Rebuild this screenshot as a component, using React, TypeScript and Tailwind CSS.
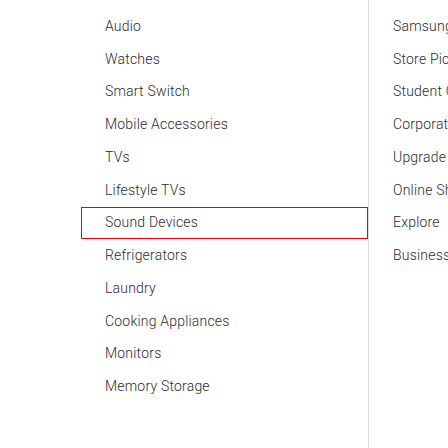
const left = [
  "Audio",
  "Watches",
  "Smart Switch",
  "Mobile Accessories",
  "TVs",
  "Lifestyle TVs",
  "Sound Devices",
  "Refrigerators",
  "Laundry",
  "Cooking Appliances",
  "Monitors",
  "Memory Storage",
];

const right = [
  "Samsung Members",
  "Store Pickup",
  "Student Offers",
  "Corporate Offers",
  "Upgrade Program",
  "Online Shop",
  "Explore",
  "Business",
];

const ACTIVE = "Sound Devices";

export default function App() {
  return (
    <div
      className="flex h-[448px] w-[448px] overflow-hidden bg-white text-[14px] font-light tracking-[0.2px] text-[#2a2a2a]"
      style={{ fontFamily: "Roboto, 'Liberation Sans', sans-serif" }}
    >
      <ul className="w-[368px] shrink-0 pt-[10px] pl-[81px]">
        {left.map((item) => (
          <li
            key={item}
            className={
              "flex h-[32.75px] items-center pl-[23px] whitespace-nowrap border " +
              (item === ACTIVE ? "border-[#e3000f]" : "border-transparent")
            }
          >
            {item}
          </li>
        ))}
      </ul>
      <div className="h-full w-px shrink-0 bg-[#dcdcdc]" />
      <ul className="min-w-0 flex-1 overflow-hidden pt-[10px] pl-[23px]">
        {right.map((item) => (
          <li
            key={item}
            className="flex h-[32.75px] items-center whitespace-nowrap border border-transparent"
          >
            {item}
          </li>
        ))}
      </ul>
    </div>
  );
}
